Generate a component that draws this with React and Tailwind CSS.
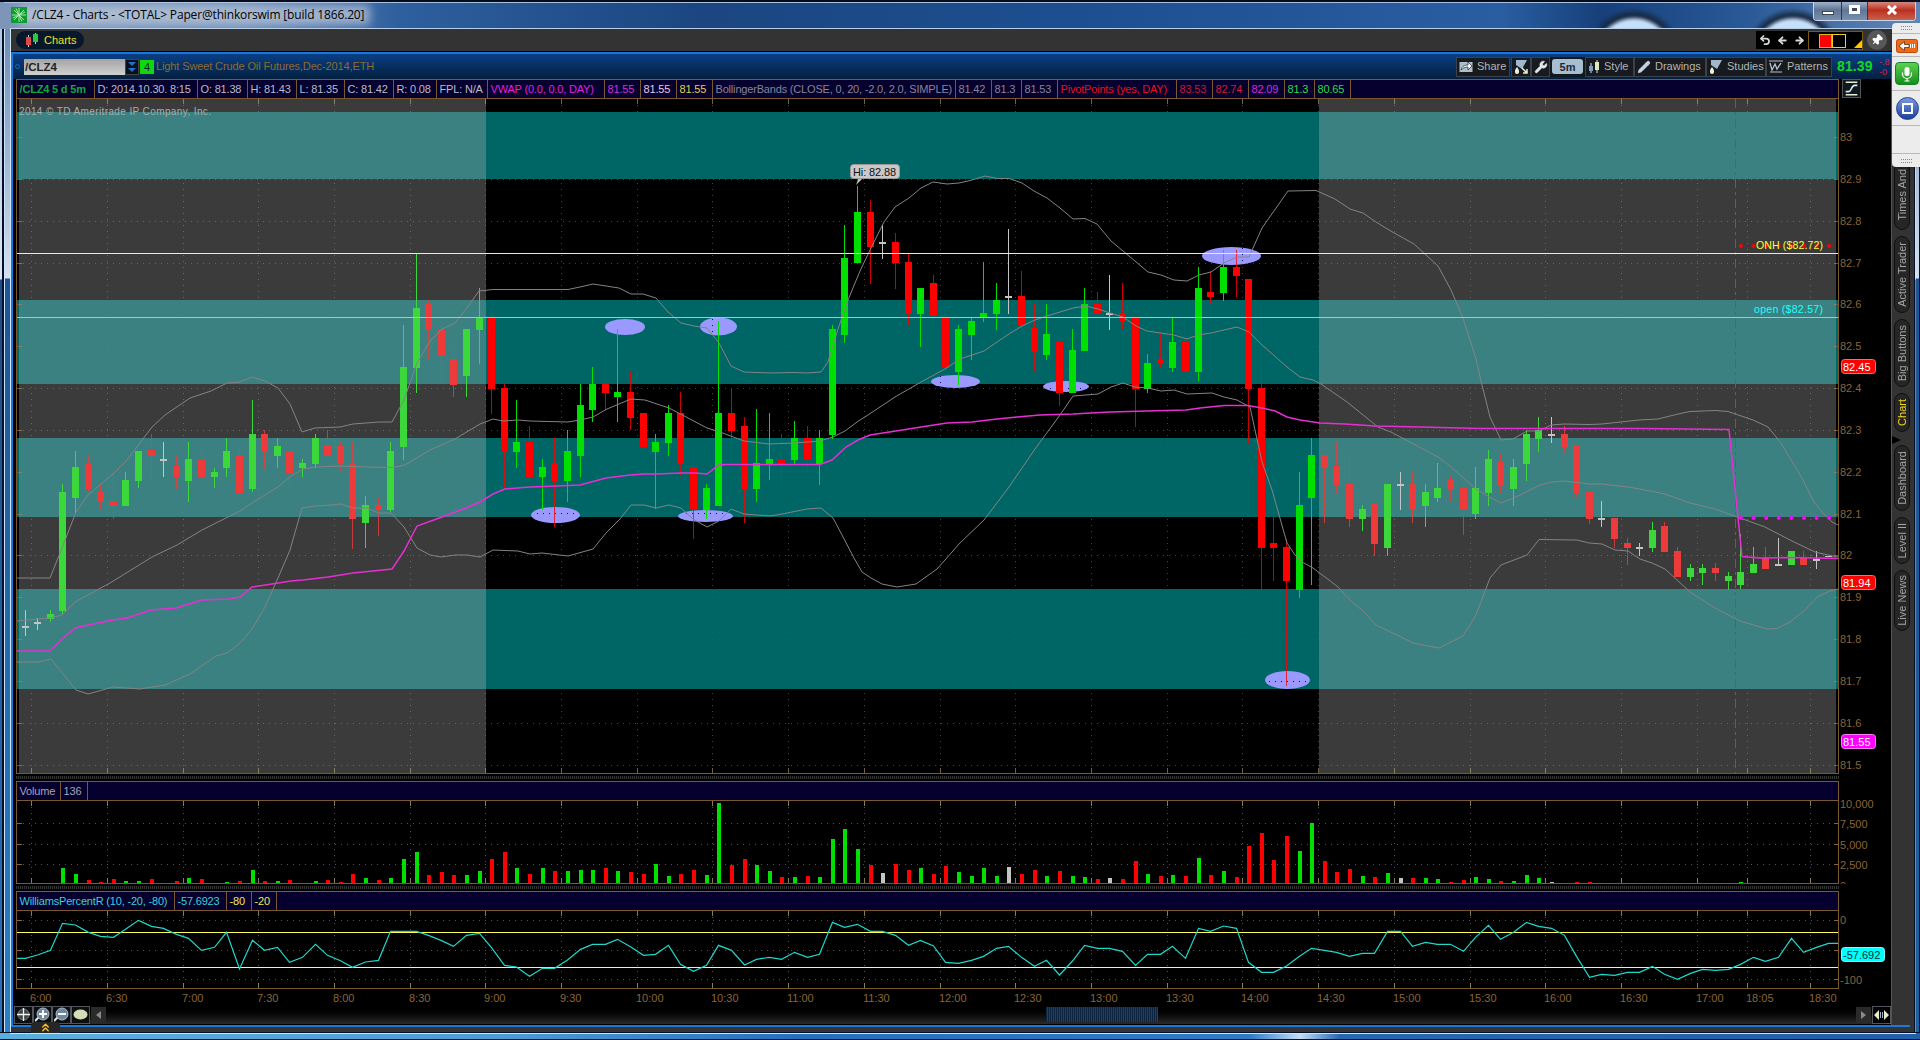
import React from 'react';
import { Undo2, ArrowLeft, ArrowRight, Pin, Wrench, ChevronsUp, Pencil } from 'lucide-react';

const UP = '#00e000';
const DOWN = '#ff0000';
const FLAT = '#c4c4c4';
const AXIS = '#8a6534';
const COLORS = { g: UP, r: DOWN, n: FLAT };

// [direction, high, body top, body bottom, low]
const candles = [
  ['n', 610, 626, 628, 636], ['n', 618, 622, 624, 630], ['g', 610, 614, 619, 622], ['g', 484, 492, 611, 614],
  ['g', 451, 467, 498, 513], ['r', 455, 463, 489, 492], ['r', 484, 492, 502, 510], ['r', 474, 501, 506, 519],
  ['g', 472, 480, 506, 506], ['g', 451, 451, 481, 488], ['r', 434, 450, 456, 480], ['n', 442, 459, 461, 477],
  ['r', 455, 466, 477, 489], ['g', 442, 459, 481, 502], ['r', 447, 459, 477, 479], ['g', 468, 472, 477, 488],
  ['g', 438, 451, 468, 477], ['r', 446, 455, 493, 493], ['g', 400, 434, 489, 492], ['r', 430, 434, 452, 469],
  ['g', 438, 446, 456, 468], ['r', 451, 451, 473, 489], ['g', 459, 463, 468, 477], ['g', 434, 438, 464, 468],
  ['r', 430, 446, 456, 456], ['r', 442, 446, 464, 472], ['r', 442, 463, 519, 549], ['g', 496, 505, 523, 548],
  ['r', 498, 505, 510, 536], ['g', 442, 451, 510, 512], ['g', 325, 367, 447, 460], ['g', 254, 308, 368, 393],
  ['r', 300, 304, 330, 359], ['r', 321, 329, 356, 383], ['r', 342, 359, 385, 397], ['g', 329, 329, 376, 397],
  ['g', 288, 318, 330, 364], ['r', 300, 318, 389, 414], ['r', 384, 388, 452, 488], ['g', 400, 442, 452, 468],
  ['r', 426, 442, 477, 479], ['g', 459, 467, 477, 510], ['r', 438, 463, 481, 527], ['g', 430, 451, 481, 502],
  ['g', 384, 405, 456, 477], ['g', 367, 384, 410, 422], ['r', 350, 384, 393, 410], ['g', 329, 392, 397, 422],
  ['r', 371, 392, 418, 430], ['r', 413, 413, 447, 459], ['g', 434, 442, 452, 509], ['g', 405, 413, 443, 456],
  ['r', 392, 413, 464, 476], ['r', 451, 467, 510, 539], ['g', 484, 488, 510, 519], ['g', 321, 413, 506, 506],
  ['r', 388, 413, 431, 460], ['r', 417, 426, 489, 523], ['g', 409, 463, 489, 502], ['g', 413, 459, 464, 480],
  ['r', 434, 459, 464, 485], ['g', 421, 438, 460, 464], ['r', 426, 438, 460, 472], ['g', 430, 438, 464, 485],
  ['g', 325, 329, 435, 439], ['g', 225, 258, 335, 343], ['g', 186, 212, 263, 263], ['r', 200, 212, 247, 284],
  ['n', 225, 242, 244, 259], ['r', 233, 242, 263, 289], ['r', 253, 262, 314, 326], ['g', 288, 288, 314, 347],
  ['r', 275, 283, 316, 330], ['r', 301, 318, 368, 372], ['g', 325, 329, 372, 385], ['g', 318, 321, 335, 360],
  ['g', 262, 313, 318, 322], ['g', 283, 300, 314, 330], ['n', 229, 296, 298, 314], ['r', 271, 296, 326, 335],
  ['r', 304, 328, 352, 372], ['g', 304, 334, 355, 360], ['r', 320, 342, 393, 406], ['g', 329, 350, 393, 393],
  ['g', 288, 304, 351, 351], ['r', 292, 304, 314, 351], ['n', 275, 313, 315, 330], ['r', 283, 313, 322, 330],
  ['r', 318, 318, 389, 427], ['g', 354, 363, 389, 393], ['r', 334, 359, 364, 368], ['g', 318, 342, 368, 372],
  ['r', 319, 342, 372, 372], ['g', 267, 288, 372, 381], ['r', 271, 292, 297, 304], ['g', 250, 267, 293, 301],
  ['r', 250, 267, 276, 297], ['r', 279, 279, 389, 443], ['r', 367, 388, 548, 591], ['r', 472, 543, 548, 581],
  ['r', 539, 547, 581, 686], ['g', 472, 505, 590, 598], ['g', 438, 455, 498, 585], ['r', 455, 455, 468, 523],
  ['r', 441, 466, 485, 494], ['r', 457, 484, 519, 527], ['g', 505, 509, 519, 531], ['r', 504, 504, 544, 556],
  ['g', 484, 484, 548, 556], ['n', 472, 484, 486, 510], ['r', 472, 484, 510, 523], ['g', 484, 492, 506, 527],
  ['g', 463, 488, 498, 502], ['r', 476, 480, 489, 502], ['r', 484, 488, 510, 535], ['g', 467, 488, 514, 519],
  ['g', 450, 459, 493, 506], ['r', 454, 462, 485, 493], ['g', 459, 467, 489, 506], ['g', 430, 434, 464, 481],
  ['g', 417, 430, 439, 452], ['n', 417, 434, 436, 443], ['r', 426, 434, 447, 453], ['r', 446, 446, 493, 497],
  ['r', 484, 492, 519, 524], ['n', 501, 518, 520, 527], ['r', 518, 518, 539, 548], ['r', 538, 543, 548, 565],
  ['n', 543, 547, 549, 556], ['g', 522, 530, 548, 552], ['r', 522, 526, 552, 552], ['r', 547, 551, 577, 577],
  ['g', 564, 568, 577, 581], ['g', 564, 568, 573, 585], ['r', 563, 568, 573, 581], ['g', 572, 576, 581, 590],
  ['g', 534, 572, 585, 589], ['g', 547, 564, 573, 573], ['r', 547, 558, 569, 569], ['n', 538, 564, 566, 566],
  ['g', 551, 551, 565, 565], ['r', 551, 558, 565, 565], ['n', 551, 559, 561, 569], ['n', 556, 556, 557, 557],
];

// bar heights in px, one for each candle
const volume = [
  0, 0, 0, 15, 9, 3, 1, 4, 2, 2, 4, 0, 2, 5, 4, 0, 1, 2, 13, 2, 2, 3, 0, 2, 3, 1, 9, 5, 3, 5, 24, 31, 8, 11, 8, 8, 12, 24,
  31, 15, 9, 15, 12, 12, 13, 13, 15, 12, 11, 9, 19, 7, 9, 13, 8, 80, 18, 24, 18, 12, 6, 6, 7, 6, 44, 54, 34, 18, 10, 19,
  13, 15, 9, 17, 11, 7, 15, 7, 16, 9, 13, 7, 12, 7, 6, 4, 5, 4, 22, 9, 7, 8, 7, 25, 8, 12, 6, 37, 50, 23, 47, 32, 60, 22,
  11, 14, 7, 6, 10, 5, 5, 5, 4, 1, 3, 6, 4, 2, 2, 8, 5, 1, 0, 1, 1, 0, 0, 0, 0, 0, 0, 0, 0, 0, 0, 0, 1,
];

// distance from the top of the panel, in thirds of a pixel
const williams = [
  595, 585, 571, 490, 495, 517, 529, 532, 508, 481, 499, 505, 523, 535, 571, 562, 517, 627, 541, 571, 562, 607, 592, 553,
  586, 602, 622, 606, 601, 514, 514, 514, 526, 542, 559, 526, 520, 563, 616, 621, 649, 625, 625, 600, 568, 553, 553, 538,
  560, 586, 583, 556, 613, 634, 616, 556, 571, 615, 598, 592, 598, 577, 592, 583, 487, 502, 493, 514, 514, 526, 556, 541,
  558, 607, 610, 601, 589, 565, 559, 592, 619, 601, 645, 603, 556, 565, 565, 574, 616, 583, 583, 559, 595, 505, 514, 498,
  505, 607, 637, 637, 618, 589, 565, 571, 577, 589, 580, 580, 514, 514, 559, 547, 553, 553, 574, 532, 496, 538, 517, 487,
  499, 505, 526, 589, 652, 643, 646, 637, 637, 619, 643, 658, 640, 628, 631, 628, 613, 592, 604, 592, 535, 577, 562, 550,
];

const upperBand = '17,578 50,578 62,548 76,512 88,495 113,474 127,460 152,427 165,415 190,398 211,391 227,383 240,382 252,377 265,381 278,388 290,404 302,432 315,428 340,427 353,424 379,422 392,422 404,400 417,363 430,341 442,329 455,323 466,309 479,291 493,289.5 568,289.5 580,287 593,284 619,288 631,294 643,294 656,298 668,312 681,323 694,326 707,328 719,343 731,366 744,372 770,373 794,372.5 807,373 821,372 828,362 838,329 848,300 860,271 871,248 884,222 895,207 909,198 921,188 933,182 947,184 959,183 972,180 985,176 997,178.5 1009,178.5 1022,183 1034,191 1047,198 1060,208 1073,219 1085,218.5 1097,224 1111,241 1123,251 1148,272 1161,275 1174,280 1187,281 1199,275 1211,272 1224,263 1237,257 1249,257 1262,228 1288,191 1316,190.5 1335,199 1350,209 1363,213 1376,222 1389,230 1414,244 1438,266 1451,290 1463,318 1476,359 1482,385 1490,417 1501,440 1513,439 1527,431 1539,431 1551,425 1564,424 1589,424.5 1602,424 1639,420 1658,419 1678,414 1690,411.5 1716,410.5 1728,411.5 1753,420 1768,427 1781,443 1803,480 1814,502 1823,513 1832,522 1838,525';
const middleBand = '17,621 38,619 50,618 62,615 75,602 110,583 152,557 177,545 202,530 240,511 252,503 278,487 291,476 303,469 316,467 340,466 366,467 392,467.5 405,465 430,450 455,439 480,424 493,419 503,421 518,420 530,421 568,422 580,420 593,417 607,409 631,399 645,400 669,408 707,428 720,432 744,441 769,444 794,443 820,441 833,437 845,431 857,422 871,413 895,397 921,382 945,369 960,359 984,351 997,342 1009,334 1022,326 1035,320 1047,316 1073,308 1086,306 1098,309 1110,313 1123,317 1136,326 1147,331 1174,335 1187,339 1198,335 1211,333 1237,327 1249,332 1261,344 1287,367 1300,377 1313,380 1321,384 1347,402 1378,427 1391,432 1438,457 1450,466 1476,489 1491,498 1501,503 1514,498 1526,492 1540,485 1552,482 1564,481 1590,484 1602,484 1628,487 1640,489 1665,494 1690,503 1715,509 1740,518 1765,527 1790,540 1815,552 1828,555 1838,557';
const lowerBand = '17,662 38,662 51,659 76,690 88,694 113,687 140,689 165,685 190,674 216,656 227,653 240,643 252,629 265,607 278,578 290,550 302,508 315,506 332,505 340,504 354,508 367,508 379,513 391,513 404,527 417,548 430,555 441,557 455,555 467,555 480,557 493,550 518,551 530,554 542,553 568,556 593,549 606,533 620,519 631,505 644,505 656,508 669,505 681,508 693,519 707,527 719,521 731,509 744,514 770,516 782,514 807,509 821,508 833,518 842,535 854,558 862,572 871,578 882,584 897,587 916,584 937,569 960,543 984,520 1009,487 1035,449 1060,415 1073,396 1098,394 1111,387 1123,383 1135,387 1148,388 1161,391 1174,390 1187,394 1212,393 1224,397 1237,400 1250,407 1262,462 1272,490 1287,543 1295,555 1302,562 1313,568 1325,577 1338,587 1350,600 1363,611 1376,625 1401,637 1413,643 1439,648 1463,636 1476,615 1490,578 1501,565 1527,555 1539,539.5 1577,540 1589,543 1602,544 1615,550 1628,551 1640,559 1652,563 1665,569 1677,580 1690,592 1715,608 1740,621 1767,629 1777,628.5 1790,622 1805,610 1817,597 1830,591 1838,589';
const vwap = '17,651 50,651 62,639 75,628 88,625 113,620 127,618 151,610 176,608 202,600 229,599 240,597 252,587 291,581 303,580 328,577 353,573 392,569 404,551 417,526 442,517 466,508 480,502 493,494 505,489 530,487 556,486 580,485 606,478 630,475 644,474 656,474 682,473 695,473 707,474 719,465 725,464.5 820,464.5 832,460 846,447 858,440 870,435 896,431 921,427 947,423 972,422 997,419 1017,417 1040,415 1073,414 1110,412 1147,411 1186,410 1200,408 1224,405.5 1248,405.5 1262,408 1275,411 1287,417 1300,420 1320,423 1345,424 1375,426 1420,427 1480,428.5 1640,428.5 1729,429.5 1742,556.5 1760,558 1790,557.5 1838,558.5';

const times = [
  [31, '6:00'], [107, '6:30'], [183, '7:00'], [258, '7:30'], [334, '8:00'], [410, '8:30'], [485, '9:00'], [561, '9:30'],
  [637, '10:00'], [712, '10:30'], [788, '11:00'], [864, '11:30'], [940, '12:00'], [1015, '12:30'], [1091, '13:00'],
  [1167, '13:30'], [1242, '14:00'], [1318, '14:30'], [1394, '15:00'], [1470, '15:30'], [1545, '16:00'], [1621, '16:30'],
  [1697, '17:00'], [1747, '18:05'], [1810, '18:30'],
];

const prices = ['83', '82.9', '82.8', '82.7', '82.6', '82.5', '82.4', '82.3', '82.2', '82.1', '82', '81.9', '81.8', '81.7', '81.6', '81.5'];

const bands = [[112, 67], [300, 84], [438, 79], [589, 100]];

const ellipses = [
  [625, 327, 20, 8], [718.5, 326.5, 18.5, 9], [555.5, 515, 24.5, 8], [705.5, 516, 27.5, 6],
  [955.5, 381.5, 24.5, 6.5], [1066, 386.5, 23, 5.5], [1231.5, 256, 29.5, 9], [1287.5, 680, 22.5, 9],
];

const studies = [
  { t: '/CLZ4 5 d 5m', w: 'w-[78px]', c: 'text-[#12a83c] font-bold' },
  { t: 'D: 2014.10.30. 8:15', w: 'w-[103px]', c: 'text-[#b9bccc]' },
  { t: 'O: 81.38', w: 'w-[50px]', c: 'text-[#b9bccc]' },
  { t: 'H: 81.43', w: 'w-[49px]', c: 'text-[#b9bccc]' },
  { t: 'L: 81.35', w: 'w-[48px]', c: 'text-[#b9bccc]' },
  { t: 'C: 81.42', w: 'w-[49px]', c: 'text-[#b9bccc]' },
  { t: 'R: 0.08', w: 'w-[43px]', c: 'text-[#b9bccc]' },
  { t: 'FPL: N/A', w: 'w-[51px]', c: 'text-[#b9bccc]' },
  { t: 'VWAP (0.0, 0.0, DAY)', w: 'w-[117px]', c: 'text-[#e020e0]' },
  { t: '81.55', w: 'w-[36px]', c: 'text-[#d030d8]' },
  { t: '81.55', w: 'w-[36px]', c: 'text-[#e8c8e8]' },
  { t: '81.55', w: 'w-[36px]', c: 'text-[#e0d050]' },
  { t: 'BollingerBands (CLOSE, 0, 20, -2.0, 2.0, SIMPLE)', w: 'w-[243px]', c: 'text-[#85859a]' },
  { t: '81.42', w: 'w-[36px]', c: 'text-[#85859a]' },
  { t: '81.3', w: 'w-[30px]', c: 'text-[#85859a]' },
  { t: '81.53', w: 'w-[36px]', c: 'text-[#85859a]' },
  { t: 'PivotPoints (yes, DAY)', w: 'w-[119px]', c: 'text-[#e8101c]' },
  { t: '83.53', w: 'w-[36px]', c: 'text-[#c41830]' },
  { t: '82.74', w: 'w-[36px]', c: 'text-[#d01c34]' },
  { t: '82.09', w: 'w-[36px]', c: 'text-[#d828e0]' },
  { t: '81.3', w: 'w-[30px]', c: 'text-[#28dc48]' },
  { t: '80.65', w: 'w-[36px]', c: 'text-[#28dc48]' },
];

const sideTabs = [
  { t: 'Times And', h: 'h-[70px]', m: 'mt-0' },
  { t: 'Active Trader', h: 'h-[77px]', m: 'mt-[6px]' },
  { t: 'Big Buttons', h: 'h-[68px]', m: 'mt-[6px]' },
  { t: 'Chart', h: 'h-[39px]', m: 'mt-[6px]', active: true },
  { t: 'Dashboard', h: 'h-[66px]', m: 'mt-[13px]' },
  { t: 'Level II', h: 'h-[47px]', m: 'mt-[6px]' },
  { t: 'Live News', h: 'h-[61px]', m: 'mt-[6px]' },
];

const barX = (i) => Math.floor(25 + 12.615 * i);
const priceY = (i) => Math.floor(137.6 + 41.83 * i);

const StudyBar = ({ cells }) => (
  <div className="flex w-[1823px] h-5 border border-[#7a5a2c] bg-[#06002e] text-[11px] tracking-[-0.18px] leading-[18px] whitespace-nowrap">
    {cells.map((cell, i) => (
      <div key={i} className={`${cell.w} ${cell.c} shrink-0 pl-[2.5px] border-r border-[#7a5a2c]`}>{cell.t}</div>
    ))}
  </div>
);

const Splitter = () => (
  <div className="h-[7px] w-[1823px] py-[2px]">
    <div className="h-[3px] bg-[repeating-linear-gradient(90deg,#343434_0_1px,#0a0a0a_1px_2px)]"></div>
  </div>
);

// Vertical dotted grid with the short ticks on both panel edges
const TimeGrid = ({ top, bottom }) => (
  <g shapeRendering="crispEdges">
    {times.map(([x]) => (
      <g key={x}>
        <line x1={x + 0.5} x2={x + 0.5} y1={top} y2={bottom} stroke="#8c7446" strokeOpacity="0.7" strokeDasharray="1 5" />
        <line x1={x + 0.5} x2={x + 0.5} y1={top} y2={top + 5} stroke="#8c7a50" />
        <line x1={x + 0.5} x2={x + 0.5} y1={bottom - 5} y2={bottom} stroke="#8c7a50" />
      </g>
    ))}
  </g>
);

const Row = ({ y }) => (
  <g shapeRendering="crispEdges">
    <line x1="17" x2="1838" y1={y + 0.5} y2={y + 0.5} stroke="#8c7446" strokeOpacity="0.7" strokeDasharray="1 5" />
    <line x1="17" x2="22" y1={y + 0.5} y2={y + 0.5} stroke={AXIS} />
    <line x1="1834" x2="1838" y1={y + 0.5} y2={y + 0.5} stroke={AXIS} />
  </g>
);

const Frame = ({ top, bottom }) => (
  <path d={`M16.5 ${top}V${bottom - 0.5}H1838.5V${top}`} fill="none" stroke="#7a5a2c" shapeRendering="crispEdges" />
);

const Tag = ({ y, w = 34, fill, edge, color = '#fff', children }) => (
  <g>
    <rect x="1841.5" y={y + 0.5} width={w} height="14" rx="3" fill={fill} stroke={edge} />
    <text x="1843" y={y + 11.5} fill={color} fontSize="11">{children}</text>
  </g>
);

const PriceChart = () => (
  <svg width="1874" height="675" viewBox="16 99 1874 675" className="block">
    <rect x="16" y="99" width="1874" height="675" fill="#000" />
    {bands.map(([y, h]) => <rect key={y} x="17" y={y} width="1821" height={h} fill="#006666" />)}
    <g opacity="0.8">
      {prices.map((p, i) => <Row key={p} y={priceY(i)} />)}
      <TimeGrid top={99} bottom={773} />
    </g>
    {bands.map(([y, h]) => <rect key={y} x="23" y={y} width="1811" height={h} fill="#006666" fillOpacity="0.75" />)}
    {ellipses.map(([cx, cy, rx, ry]) => <ellipse key={cx} cx={cx} cy={cy} rx={rx} ry={ry} fill="#9999ff" />)}
    <g stroke="#101040" strokeDasharray="1 5" shapeRendering="crispEdges">
      <path d="M537 513.5H575 M686 513.5H726 M936 388.5H974 M1050 388.5H1083 M1269 681.5H1307" />
      <path d="M712.5 319V334 M1242.5 248V265 M940.5 376V387" />
    </g>
    <g shapeRendering="crispEdges">
      {candles.map(([d, hi, top, bottom, lo], i) => (
        <g key={i} fill={COLORS[d]}>
          <rect x={barX(i)} y={hi} width="1" height={lo - hi} fillOpacity={d === 'r' ? 0.8 : 1} />
          <rect x={barX(i) - 3} y={top} width="7" height={bottom - top} />
        </g>
      ))}
    </g>
    {/* out of session shading */}
    <rect x="19" y="99" width="467" height="674" fill="#c4c4c4" fillOpacity="0.3" />
    <rect x="1319" y="99" width="517" height="674" fill="#c4c4c4" fillOpacity="0.3" />
    <line x1="1735.5" x2="1735.5" y1="99" y2="773" stroke="#606060" strokeDasharray="9 4 3 4" />
    <g fill="none" stroke="#848484" strokeWidth="1">
      <polyline points={upperBand} />
      <polyline points={middleBand} />
      <polyline points={lowerBand} />
    </g>
    <polyline points={vwap} fill="none" stroke="#e62fd2" strokeWidth="1.5" />
    <g shapeRendering="crispEdges">
      <rect x="17" y="253" width="1821" height="1" fill="#ffff33" />
      <rect x="17" y="317" width="1821" height="1" fill="#1fffff" />
    </g>
    {[0, 1, 2, 3, 4, 5, 6, 7].map((i) => (
      <g key={i}>
        <circle cx={1741 + i * 12.6} cy="246" r="2" fill="#ff0000" />
        <circle cx={1741 + i * 12.6} cy="518" r="2" fill="#ff00ff" />
      </g>
    ))}
    <text x="1756" y="249" fontSize="10.5" fill="#ffff33" textLength="67">ONH ($82.72)</text>
    <text x="1754" y="313" fontSize="10.5" fill="#1fffff" textLength="69">open ($82.57)</text>
    <text x="19" y="115" fontSize="10" fill="#a8adad" textLength="192">2014 © TD Ameritrade IP Company, Inc.</text>
    <path d="M859 177l-3 8 8-8z" fill="#c9c9c9" />
    <rect x="850.5" y="164.5" width="49" height="14" rx="3" fill="#c9c9c9" stroke="#999" />
    <text x="853" y="176" fontSize="11" fill="#111" textLength="43">Hi: 82.88</text>
    <Frame top={98} bottom={774} />
    {prices.map((p, i) => <text key={p} x="1840" y={priceY(i) + 4} fontSize="11" fill={AXIS}>{p}</text>)}
    <Tag y={359} fill="#ff0000" edge="#ff6a6a">82.45</Tag>
    <Tag y={575} fill="#ff0000" edge="#ff6a6a">81.94</Tag>
    <Tag y={734} fill="#ff00ff" edge="#ff7aff">81.55</Tag>
  </svg>
);

const VolumeChart = () => (
  <svg width="1874" height="83" viewBox="16 801 1874 83" className="block overflow-visible">
    <Row y={823} />
    <Row y={844} />
    <Row y={864} />
    <TimeGrid top={801} bottom={883} />
    <g shapeRendering="crispEdges">
      {volume.map((h, i) => <rect key={i} x={barX(i) - 1} y={883 - h} width="4" height={h} fill={COLORS[candles[i][0]]} />)}
    </g>
    <Frame top={801} bottom={884} />
    <g fontSize="11" fill={AXIS}>
      <text x="1840" y="808">10,000</text>
      <text x="1840" y="828">7,500</text>
      <text x="1840" y="849">5,000</text>
      <text x="1840" y="869">2,500</text>
      <text x="1840" y="890">0</text>
    </g>
    {/* the zero label only peeks out above the panel edge */}
    <rect x="1839" y="884" width="40" height="7" fill="#000" />
  </svg>
);

const WilliamsChart = () => (
  <svg width="1874" height="78" viewBox="16 911 1874 78" className="block">
    <Row y={920} />
    <Row y={950} />
    <Row y={979} />
    <TimeGrid top={911} bottom={988} />
    <g shapeRendering="crispEdges" fill="#ffff55">
      <rect x="17" y="932" width="1821" height="1" />
      <rect x="17" y="967" width="1821" height="1" />
    </g>
    <polyline
      points={`17,958.3 ${williams.map((v, i) => `${barX(i) + 0.5},${760 + v / 3}`).join(' ')} 1838,943.3`}
      fill="none"
      stroke="#1fd8cc"
      strokeWidth="1.2"
    />
    <Frame top={911} bottom={989} />
    <text x="1840" y="924" fontSize="11" fill={AXIS}>0</text>
    <text x="1840" y="984" fontSize="11" fill={AXIS}>-100</text>
    <Tag y={947} w={43} fill="#00ffff" edge="#7affff" color="#053030">-57.692</Tag>
  </svg>
);

const ToolButton = ({ className, icon, children }) => (
  <div className={`${className} h-5 flex items-center gap-[4px] pl-[2px] bg-[#171b20] border border-[#3a4149] text-[11px] text-[#b4b4b4] shrink-0`}>
    {icon}
    {children}
  </div>
);

const DropIcon = ({ arrow }) => (
  <svg width="14" height="16" viewBox="0 0 14 16" className="shrink-0">
    <path d="M2 1h11L8 10 2 6z" fill="#9fb6cc" />
    <path d="M3 8c-2 3-2 3-2 5a2 2 0 0 0 4 0c0-2 0-2-2-5z" fill="#eef3d8" />
    {arrow && <path d="M8 9l5 5m0-4v4H9" stroke="#eef3d8" strokeWidth="1.5" fill="none" />}
  </svg>
);

const TitleBar = () => (
  <div className="relative flex h-[29px] shrink-0 border-t-2 border-[#060c1c] bg-[linear-gradient(90deg,#7d96b8_0,#6d8cb6_240px,#2e5f9e_400px,#1b4681_700px,#1d4f91_1100px,#2a5ea2_1500px,#17407a_1600px,#2a5a98_1750px,#5f83b4_1900px)] overflow-hidden">
    <div className="absolute left-[1585px] top-[6px] w-[98px] h-[98px] rounded-full bg-[radial-gradient(circle_closest-side,#a9cdf0_0,#c8e2fa_74%,#16263e_84%,transparent_100%)] blur-[1px]"></div>
    <div className="absolute left-[1744px] top-[6px] w-[98px] h-[98px] rounded-full bg-[radial-gradient(circle_closest-side,#a9cdf0_0,#c8e2fa_74%,#16263e_84%,transparent_100%)] blur-[1px]"></div>
    <div className="absolute left-[4px] right-[4px] top-0 h-px bg-[#a9c2e0]"></div>
    <div className="absolute left-[10px] right-0 bottom-0 h-px bg-[#b8d0ea]"></div>
    <div className="absolute left-[20px] top-[3px] w-[350px] h-[20px] bg-[#c3cede] opacity-70 blur-[5px]"></div>
    <div className="relative flex items-center gap-[5px] pl-[11px] pb-[2px]">
      <svg width="16" height="16" viewBox="0 0 16 16">
        <rect width="16" height="16" fill="#0f9a32" />
        <path d="M8 1v14M1 8h14M3 3l10 10M13 3L3 13M5 1.500l6 13M14 5L2 11" stroke="#b8f0b0" strokeWidth="0.9" />
      </svg>
      <span className="text-[12px] tracking-[-0.16px] text-black whitespace-nowrap font-['Open_Sans','Noto_Sans',sans-serif]">/CLZ4 - Charts - &lt;TOTAL&gt; Paper@thinkorswim [build 1866.20]</span>
    </div>
    <div className="absolute right-[4px] top-[-2px] flex w-[103px] h-[21px] rounded-b border border-t-0 border-[#c9d6e8] bg-[#1c2c44] overflow-hidden">
      <div className="w-[28px] flex justify-center pt-[11px] bg-linear-to-b from-[#b3c2d6] via-[#5f7593] to-[#7891b0] border-r border-[#2a3a52]">
        <div className="w-[12px] h-[4px] bg-white border border-[#3c4656]"></div>
      </div>
      <div className="w-[26px] flex justify-center pt-[5px] bg-linear-to-b from-[#b3c2d6] via-[#5f7593] to-[#7891b0] border-r border-[#2a3a52]">
        <div className="w-[11px] h-[9px] border-[3px] border-white bg-[#3c4656]"></div>
      </div>
      <div className="flex-1 flex justify-center items-center bg-linear-to-b from-[#d79a92] via-[#bb2c1c] to-[#c8604a]">
        <svg width="12" height="10" viewBox="0 0 12 10"><path d="M2 1l8 8M10 1L2 9" stroke="#fff" strokeWidth="3" /></svg>
      </div>
    </div>
  </div>
);

const TopTabs = () => (
  <div className="flex h-[22px] items-center justify-between bg-[#333333] pl-[5px] pr-[10px]">
    <div className="flex items-center h-[18px] w-[68px] rounded-full bg-[#06182a] pl-[9px] gap-[4px] text-[11px] text-[#f2e022]">
      <svg width="15" height="14" viewBox="0 0 15 14">
        <path d="M3.500 2v12M10.500 0v11" stroke="#ccc" />
        <rect x="1" y="4" width="5" height="8" fill="#e04848" />
        <rect x="8" y="1" width="5" height="8" fill="#28c840" />
      </svg>
      Charts
    </div>
    <div className="flex items-center mr-[17px]">
      <div className="flex items-center justify-around w-[52px] h-[18px] bg-black text-[#d8d8d8]">
        <Undo2 size={12} strokeWidth={3.5} />
        <ArrowLeft size={11} strokeWidth={4} />
        <ArrowRight size={11} strokeWidth={4} />
      </div>
      <div className="flex items-end w-[55px] h-[19px] bg-black border border-[#7a5a10] pl-[10px] pb-[1px]">
        <div className="w-[13px] h-[14px] bg-[#ff0000] border border-[#e8b010]"></div>
        <div className="w-[14px] h-[14px] border border-[#f2d018]"></div>
        <svg width="8" height="8" viewBox="0 0 8 8" className="ml-[8px]"><path d="M8 0v8H0z" fill="#ffc800" /></svg>
      </div>
      <div className="ml-[4px] w-5 h-5 rounded-full bg-[#575757] flex items-center justify-center text-white">
        <Pin size={12} fill="currentColor" className="rotate-45" />
      </div>
    </div>
  </div>
);

const Toolbar = () => (
  <div className="flex items-center justify-between h-[25px] w-[1878px] bg-linear-to-b from-[#0a3f86] to-[#04203f] pl-[2px] pr-0 overflow-hidden">
    <div className="flex items-center">
      <div className="w-[5px] h-[5px] rounded-full border border-[#1668c0] mr-[4px]"></div>
      <div className="w-[101px] h-[16px] bg-linear-to-b from-[#a4a4a4] to-[#d0d0d0] pl-[1px] text-[11.5px] leading-[17px] font-bold text-[#222]">/CLZ4</div>
      <div className="w-[14px] h-[16px] bg-[#05101e] border border-[#444] flex flex-col items-center justify-center gap-[2px]">
        <svg width="8" height="4" viewBox="0 0 8 4"><path d="M0 0h8L4 4z" fill="#2470c8" /></svg>
        <svg width="8" height="4" viewBox="0 0 8 4"><path d="M0 0h8L4 4z" fill="#2470c8" /></svg>
      </div>
      <div className="ml-px w-[14px] h-[14px] bg-[#10d810] text-[11px] leading-[14px] text-center text-[#123]">4</div>
      <span className="ml-[2px] text-[11px] tracking-[-0.12px] text-[#8a6c34]">Light Sweet Crude Oil Futures,Dec-2014,ETH</span>
    </div>
    <div className="flex items-center">
      <ToolButton
        className="w-[54px]"
        icon={(
          <svg width="14" height="13" viewBox="0 0 14 13" className="shrink-0">
            <rect x="0.500" y="2" width="13" height="10" fill="#aebfca" />
            <path d="M2 10c1-4 4-5 7-5V2l4 4-4 4V7C6 7 4 8 2 10z" fill="#fff" stroke="#25384a" strokeWidth="0.8" />
          </svg>
        )}
      >
        Share
      </ToolButton>
      <ToolButton className="w-[20px] ml-px" icon={<DropIcon arrow />} />
      <ToolButton className="w-[19px]" icon={<Wrench size={14} fill="#e4e8ec" color="#e4e8ec" strokeWidth={1} className="shrink-0" />} />
      <div className="w-[35px] h-5 p-[2px] bg-[#101820] flex items-center">
        <div className="w-full h-[15px] rounded-[3px] bg-[#a9bdd0] text-[11px] leading-[16px] font-bold text-center text-[#1c2a38]">5m</div>
      </div>
      <ToolButton
        className="w-[49px]"
        icon={(
          <svg width="12" height="14" viewBox="0 0 12 14" className="shrink-0">
            <path d="M3 3v10M9 0v13" stroke="#dde" />
            <rect x="1" y="6" width="4" height="5" fill="#7f9cc0" />
            <rect x="7" y="2" width="4" height="8" fill="#dfe8b8" />
          </svg>
        )}
      >
        Style
      </ToolButton>
      <ToolButton className="w-[72px]" icon={<Pencil size={14} fill="#c4d4e4" color="#c4d4e4" strokeWidth={1} className="shrink-0" />}>Drawings</ToolButton>
      <ToolButton className="w-[60px]" icon={<DropIcon />}>Studies</ToolButton>
      <ToolButton
        className="w-[66px]"
        icon={(
          <svg width="14" height="13" viewBox="0 0 14 13" className="shrink-0">
            <path d="M0 1h14M1 12h12" stroke="#b8c4cc" />
            <path d="M1 3l2 7 3-6 2 5 4-6" stroke="#b8c4cc" strokeWidth="1.300" fill="none" />
          </svg>
        )}
      >
        Patterns
      </ToolButton>
      <span className="ml-[5px] w-[42px] text-[14px] font-bold tracking-[0.1px] text-[#10d828]">81.39</span>
      <div className="w-[12px] text-[9px] leading-[10px] text-[#e01838]">
        <div>-.8</div>
        <div>-0</div>
      </div>
    </div>
  </div>
);

const BottomBar = () => (
  <div className="flex h-[19px] items-center pl-[1px] bg-linear-to-b from-black to-[#2a2a2a]">
    {[0, 1, 2, 3].map((i) => (
      <div key={i} className="w-[19px] h-[18px] bg-[#0c0e10] border border-[#50565c] flex items-center justify-center">
        <svg width="15" height="15" viewBox="0 0 15 15">
          {i === 0 && (
            <g>
              <circle cx="7.500" cy="7.500" r="5.500" fill="#3c444c" stroke="#8c949c" strokeWidth="0.8" />
              <path d="M7.500 1v13M1 7.500h13" stroke="#f0f4e0" strokeWidth="1.300" />
            </g>
          )}
          {(i === 1 || i === 2) && (
            <g>
              <path d="M0 14l4-4" stroke="#e4e8ec" strokeWidth="2" />
              <circle cx="8" cy="7" r="6" fill="#6f88a0" stroke="#a9bccc" />
              <path d={i === 1 ? 'M8 3v8M4 7h8' : 'M4 7h8'} stroke="#fff" strokeWidth="2" />
            </g>
          )}
          {i === 3 && <ellipse cx="7.500" cy="7.500" rx="7" ry="5" fill="#d4dcb8" />}
        </svg>
      </div>
    ))}
    <div className="w-[15px] h-[16px] ml-px bg-[#2a2a2a] flex items-center justify-center">
      <svg width="5" height="8" viewBox="0 0 5 8"><path d="M5 0v8L0 4z" fill="#8a8a8a" /></svg>
    </div>
    <div className="w-[940px]"></div>
    <div className="w-[112px] h-[15px] bg-[repeating-linear-gradient(90deg,#0c2440_0_1px,#1a4068_1px_2px)]"></div>
    <div className="flex-1"></div>
    <div className="w-[15px] h-[16px] bg-[#2a2a2a] flex items-center justify-center">
      <svg width="5" height="8" viewBox="0 0 5 8"><path d="M0 0v8l5-4z" fill="#8a8a8a" /></svg>
    </div>
    <div className="w-[19px] h-[18px] ml-px bg-black border border-[#50565c] flex items-center justify-center">
      <svg width="15" height="10" viewBox="0 0 15 10">
        <path d="M5 0v10L0 5zM10 0v10l5-5z" fill="#e4ecc8" />
        <path d="M6.500 2v6M8.500 2v6" stroke="#9ab0c4" />
      </svg>
    </div>
  </div>
);

const SideTabs = () => (
  <div className="relative w-[20px] bg-[#333333] border-l border-[#555] pl-[2px] pt-[106px] shrink-0">
    {sideTabs.map((tab) => (
      <div key={tab.t} className={`${tab.h} ${tab.m} w-[16px] rounded-[8px] border border-[#101010] bg-[#262626] flex items-center justify-center`}>
        <span className={`[writing-mode:vertical-rl] rotate-180 text-[11px] whitespace-nowrap ${tab.active ? 'text-[#f0d818]' : 'text-[#a4a4a4]'}`}>{tab.t}</span>
      </div>
    ))}
    <svg width="9" height="8" viewBox="0 0 9 8" className="absolute left-0 top-[382px]"><path d="M0 0l9 4-9 4z" fill="#000" /></svg>
  </div>
);

const Grip = () => (
  <svg width="12" height="4" viewBox="0 0 12 4">
    <path d="M0 .5h12M0 3.500h12" stroke="#888" strokeDasharray="1 1" />
  </svg>
);

// Floating capture widget docked on the right edge
const Widget = () => (
  <div className="absolute right-0 top-[23px] w-[28px] h-[144px] rounded-l bg-[#ececec] flex flex-col items-end divide-y divide-[#b8b8b8] shadow">
    <div className="w-full h-[11px] pt-[3px] pl-[9px]"><Grip /></div>
    <div className="w-full h-[23px] pl-[4px] pt-[5px]">
      <svg width="22" height="14" viewBox="0 0 22 14">
        <rect x="0.500" y="0.500" width="21" height="13" rx="2" fill="#ee6a18" stroke="#b8480c" />
        <path d="M3 7l5.500-4.500v3H13v3H8.500v3z" fill="#fff" stroke="#5a2a08" strokeWidth="0.8" />
        <path d="M14.500 5v4M16.500 5v4M18.500 5v4" stroke="#fff" />
      </svg>
    </div>
    <div className="w-full h-[34px] pl-[3px] pt-[5px]">
      <div className="w-[24px] h-[23px] rounded bg-linear-to-b from-[#5cd050] to-[#10901c] border border-[#188028] flex items-center justify-center">
        <svg width="12" height="16" viewBox="0 0 12 16">
          <rect x="3.500" y="1" width="5" height="9" rx="2.500" fill="#fff" />
          <path d="M1.500 6.500v1.500a4.500 4.500 0 0 0 9 0V6.500M6 12.500V15M3.500 15h5" stroke="#fff" strokeWidth="1.200" fill="none" />
        </svg>
      </div>
    </div>
    <div className="w-full h-[35px] pl-[4px] pt-[6px]">
      <div className="w-[23px] h-[23px] rounded-full bg-linear-to-b from-[#7a9ae0] to-[#1c3f9c] border border-[#23408c] flex items-center justify-center">
        <div className="w-[11px] h-[11px] border-2 border-white"></div>
      </div>
    </div>
    <div className="w-full h-[28px]"></div>
    <div className="w-full h-[13px] pt-[5px] pl-[9px]"><Grip /></div>
  </div>
);

export default function App() {
  return (
    <div className="relative w-[1920px] h-[1040px] overflow-hidden flex flex-col bg-black font-['Liberation_Sans',Arial,sans-serif]">
      <TitleBar />
      <div className="flex flex-1 min-h-0">
        {/* left window edge */}
        <div className="w-[4px] bg-[linear-gradient(180deg,#b4c8e0_0,#d8e4f2_250px,#1c4c88_251px,#2a72b8_100%)] border-r-2 border-[#04102a]"></div>
        <div className="w-[6px] border-l border-[#cfe4f8] bg-[linear-gradient(180deg,#6c8cb4_0,#d4e0ee_249px,#1f5594_250px,#2a80c0_100%)]"></div>
        <div className="w-px bg-[#cfe4f8]"></div>
        <div className="flex-1 min-w-0 flex flex-col bg-[#333333]">
          <TopTabs />
          <div className="h-[1px] bg-black"></div>
          <div className="flex h-[975px] border-[2px] border-[#1878dc] mr-[4px]">
            <div className="w-[1878px] bg-black flex flex-col">
              <Toolbar />
              <div className="pl-[3px] flex flex-col">
                <div className="flex h-5">
                  <StudyBar cells={studies} />
                  <svg width="19" height="19" viewBox="0 0 19 19" className="ml-[3px] border border-[#555] bg-[#101820]">
                    <path d="M3 2.500h13M3 16.500h13" stroke="#e8f0d8" strokeWidth="1.500" />
                    <path d="M3 13h3c4 0 3-7 7-7h3" stroke="#d8e8f8" strokeWidth="1.800" fill="none" />
                  </svg>
                </div>
                <PriceChart />
                <Splitter />
                <StudyBar
                  cells={[
                    { t: 'Volume', w: 'w-[44px]', c: 'text-[#a4a4b8]' },
                    { t: '136', w: 'w-[27px]', c: 'text-[#a4a4b8]' },
                  ]}
                />
                <VolumeChart />
                <Splitter />
                <StudyBar
                  cells={[
                    { t: 'WilliamsPercentR (10, -20, -80)', w: 'w-[158px]', c: 'text-[#38d0dc]' },
                    { t: '-57.6923', w: 'w-[52px]', c: 'text-[#38d0dc]' },
                    { t: '-80', w: 'w-[25px]', c: 'text-[#f0e850]' },
                    { t: '-20', w: 'w-[25px]', c: 'text-[#f0e850]' },
                  ]}
                />
                <WilliamsChart />
                <svg width="1874" height="16" viewBox="16 989 1874 16" className="block">
                  {times.map(([x, label]) => <text key={x} x={x - 1} y="1002" fontSize="11" fill={AXIS}>{label}</text>)}
                </svg>
              </div>
              <BottomBar />
            </div>
            <SideTabs />
          </div>
          <div className="h-[5px] pl-[20px]">
            <div className="relative w-[29px] h-[11px] top-[-5px] rounded-t bg-[#262626] text-[#ffc428] flex justify-center">
              <ChevronsUp size={13} strokeWidth={2.5} className="-mt-px" />
            </div>
          </div>
        </div>
        <div className="w-[2px] bg-[linear-gradient(180deg,#b4c8e0_0,#d8e4f2_250px,#4c88c8_251px,#4c98d8_100%)] border-l border-[#04102a]"></div>
        <div className="w-[4px] bg-[linear-gradient(180deg,#6c8cb4_0,#d4e0ee_249px,#1f5594_250px,#1c60a0_100%)] border-r border-[#04102a]"></div>
      </div>
      <div className="h-[8px] shrink-0 border-y border-[#04102a] bg-[linear-gradient(90deg,#5ab0dc_0,#4c9cd4_500px,#2470bc_800px,#2c7cc4_1250px,#c4dcf4_1300px,#2468b0_1340px,#1f60a8_100%)]">
        <div className="h-px ml-[10px] mr-[4px] bg-[#cfe4f8]"></div>
      </div>
      <Widget />
    </div>
  );
}
